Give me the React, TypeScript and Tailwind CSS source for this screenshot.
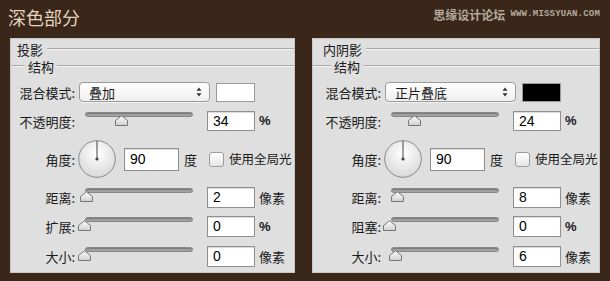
import React from "react";

const cjk = { fontFamily: '"Noto Sans CJK SC", "Noto Sans", sans-serif' };
const num = { fontFamily: '"Liberation Sans", Arial, sans-serif' };

type SliderRow = { label: string; value: string; unit: string; thumb: number };

type PanelProps = {
  title: string;
  blend: string;
  swatch: string;
  opacity: string;
  opacityThumb: number;
  rows: SliderRow[];
  padClass: string;
  lead: string;
  widthClass: string;
};

const Line = () => (
  <div className="h-[2px] flex-1 border-t border-[#a9a9a9] border-b border-b-[#f4f4f4]" />
);

const Thumb = ({ left }: { left: number }) => (
  <svg
    width="13"
    height="11"
    viewBox="0 0 13 11"
    className="absolute top-[3px]"
    style={{ left }}
  >
    <defs>
      <linearGradient id="tg" x1="0" y1="0" x2="0" y2="1">
        <stop offset="0" stopColor="#ffffff" />
        <stop offset="1" stopColor="#cfcfcf" />
      </linearGradient>
    </defs>
    <polygon
      points="0.5,10.5 0.5,5.5 6.5,0.8 12.5,5.5 12.5,10.5"
      fill="url(#tg)"
      stroke="#777"
      strokeWidth="1"
      strokeLinejoin="round"
    />
  </svg>
);

const Slider = ({ thumb }: { thumb: number }) => (
  <div className="w-[128px] h-full pl-[6px] pt-[1px] shrink-0">
    <div className="relative w-[108px] h-[14px]">
      <div className="h-[5px] rounded-full bg-[#a3a3a3] border border-[#868686] shadow-[inset_0_1px_1px_rgba(0,0,0,0.25)]" />
      <Thumb left={thumb} />
    </div>
  </div>
);

const NumBox = ({ value, h = "h-[21px]", w = "w-[48px]" }: { value: string; h?: string; w?: string }) => (
  <div
    className={`${w} ${h} shrink-0 bg-white border border-[#8e8e8e] shadow-[inset_0_1px_1px_rgba(0,0,0,0.15)] flex items-center pl-[5px] text-[14px] text-black`}
    style={num}
  >
    {value}
  </div>
);

const Label = ({ text }: { text: string }) => (
  <div className="w-[58px] shrink-0 text-right text-[13px] text-[#1a1a1a] leading-none">{text}</div>
);

const Dial = () => (
  <svg width="38" height="38" viewBox="0 0 38 38" className="ml-[3px] shrink-0">
    <defs>
      <radialGradient id="dg" cx="0.5" cy="0.35" r="0.65">
        <stop offset="0" stopColor="#ffffff" />
        <stop offset="1" stopColor="#d9d9d9" />
      </radialGradient>
    </defs>
    <circle cx="19" cy="19" r="18.3" fill="url(#dg)" stroke="#8a8a8a" strokeWidth="1" />
    <line x1="19" y1="19" x2="19" y2="1" stroke="#444" strokeWidth="1" />
    <circle cx="19" cy="19" r="1.6" fill="#444" />
  </svg>
);

const Panel = (p: PanelProps) => (
  <div className={`${p.widthClass} h-[235px] bg-[#dfdfdf] border border-[#c8c8c8] flex flex-col shrink-0`} style={cjk}>
    <div className={`h-[20px] flex items-center ${p.padClass}`}>
      <span className="text-[13px] text-[#1a1a1a] mr-[4px] leading-none">{p.title}</span>
      <Line />
    </div>
    <div className="h-[14px] flex items-center">
      <div className={p.lead}>
        <Line />
      </div>
      <span className="text-[13px] text-[#1a1a1a] mx-[3px] leading-none">结构</span>
      <Line />
    </div>

    <div className={`flex flex-col ${p.padClass}`}>
      {/* blend mode */}
      <div className="mt-[9px] h-[20px] flex items-center">
        <Label text="混合模式:" />
        <div className="ml-[4px] w-[131px] h-[20px] rounded-[4px] border border-[#9a9a9a] bg-gradient-to-b from-white to-[#efefef] flex items-center justify-between pl-[9px] pr-[7px] shadow-[0_1px_0_rgba(255,255,255,0.6)]">
          <span className="text-[13px] text-[#1a1a1a] leading-none">{p.blend}</span>
          <svg width="6" height="10" viewBox="0 0 6 10">
            <polygon points="3,0.5 5.5,3.8 0.5,3.8" fill="#333" />
            <polygon points="3,9.5 5.5,6.2 0.5,6.2" fill="#333" />
          </svg>
        </div>
        <div className="ml-[6px] w-[39px] h-[19px] border border-[#9a9a9a]" style={{ background: p.swatch }} />
      </div>

      {/* opacity */}
      <div className="mt-[9px] h-[20px] flex items-center">
        <Label text="不透明度:" />
        <div className="h-[20px] flex items-start ml-[4px]">
          <Slider thumb={p.opacityThumb} />
        </div>
        <NumBox value={p.opacity} h="h-[20px]" />
        <span className="ml-[4px] text-[13px] text-[#1a1a1a] font-bold" style={num}>%</span>
      </div>

      {/* angle */}
      <div className="mt-[9px] h-[38px] flex items-center">
        <Label text="角度:" />
        <Dial />
        <div className="ml-[8px]">
          <NumBox value="90" h="h-[23px]" w="w-[55px]" />
        </div>
        <span className="ml-[5px] text-[13px] text-[#1a1a1a] leading-none">度</span>
        <div className="ml-[12px] w-[15px] h-[15px] rounded-[3px] border border-[#9c9c9c] bg-gradient-to-b from-white to-[#e6e6e6] shrink-0" />
        <span className="ml-[5px] text-[12.5px] text-[#1a1a1a] leading-none whitespace-nowrap">使用全局光</span>
      </div>

      {p.rows.map((r, i) => (
        <div key={r.label} className={`${i === 1 ? "mt-[8px]" : "mt-[9px]"} h-[21px] flex items-center`}>
          <Label text={r.label} />
          <div className="h-[21px] flex items-start ml-[4px]">
            <Slider thumb={r.thumb} />
          </div>
          <NumBox value={r.value} />
          <span
            className={`ml-[4px] text-[13px] text-[#1a1a1a] leading-none ${r.unit === "%" ? "font-bold" : ""}`}
            style={r.unit === "%" ? num : undefined}
          >
            {r.unit}
          </span>
        </div>
      ))}
    </div>
  </div>
);

export default function App() {
  return (
    <div className="w-[610px] h-[281px] bg-[#3b2719] overflow-hidden" style={cjk}>
      <div className="h-[38px] flex justify-between">
        <div className="pl-[8px] pt-[6px] text-[18px] leading-[22px] text-[#e2d4bd]">深色部分</div>
        <div className="pr-[10px] pt-[7px] flex items-center h-[22px] text-[#b3aa9d]">
          <span className="text-[12px] font-bold leading-none">思缘设计论坛</span>
          <span
            className="ml-[5px] text-[9px] font-bold leading-none tracking-[0.2px]"
            style={{ fontFamily: '"Liberation Mono", monospace' }}
          >
            WWW.MISSYUAN.COM
          </span>
        </div>
      </div>
      <div className="flex pl-[10px] gap-[17px]">
        <Panel
          title="投影"
          blend="叠加"
          swatch="#ffffff"
          opacity="34"
          opacityThumb={30}
          padClass="pl-[6px]"
          lead="w-[14px]"
          widthClass="w-[285px]"
          rows={[
            { label: "距离:", value: "2", unit: "像素", thumb: -5 },
            { label: "扩展:", value: "0", unit: "%", thumb: -7 },
            { label: "大小:", value: "0", unit: "像素", thumb: -7 },
          ]}
        />
        <Panel
          title="内阴影"
          blend="正片叠底"
          swatch="#000000"
          opacity="24"
          opacityThumb={17}
          padClass="pl-[10px]"
          lead="w-[18px]"
          widthClass="w-[288px]"
          rows={[
            { label: "距离:", value: "8", unit: "像素", thumb: 0 },
            { label: "阻塞:", value: "0", unit: "%", thumb: -8 },
            { label: "大小:", value: "6", unit: "像素", thumb: -2 },
          ]}
        />
      </div>
    </div>
  );
}
